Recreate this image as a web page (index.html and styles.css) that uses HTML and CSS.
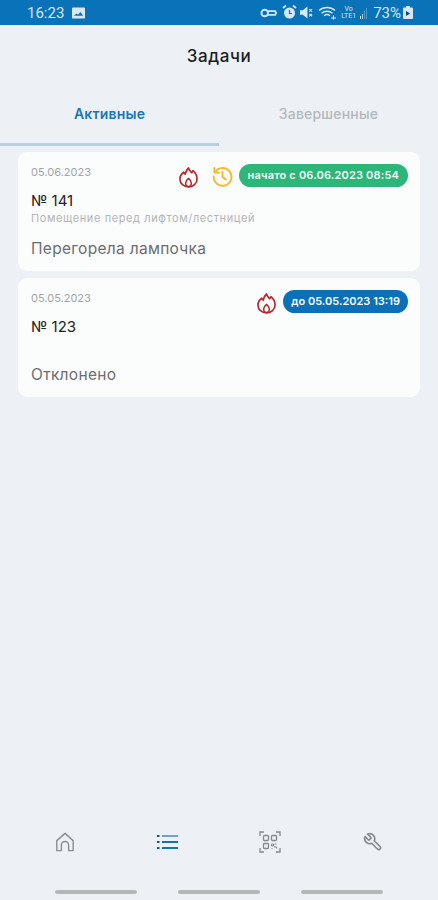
FILE: index.html
```html
<!DOCTYPE html>
<html lang="ru">
<head>
    <meta charset="UTF-8">
    <title>Задачи</title>
    <meta name="viewport" content="width=device-width, initial-scale=1.0">
    <link rel="stylesheet" href="styles.css">
</head>
<body>
    <div class="status-bar">
        <div class="status-left">
            <span class="status-time">16:23</span>
            <svg class="status-pic" viewBox="0 0 14 12"><path fill="currentColor" fill-rule="evenodd" d="M1 0h12a1 1 0 011 1v10a1 1 0 01-1 1H1a1 1 0 01-1-1V1a1 1 0 011-1zm1 9h10L9 5 6.5 8 5 6.500z"/></svg>
        </div>
        <div class="status-right">
            <svg class="st-key" viewBox="0 0 18 10" fill="none" stroke="currentColor" stroke-width="2"><circle cx="5" cy="5" r="3.500"/><path d="M8.500 3h7.500l1.200 2-1.200 2H8.500"/></svg>
            <svg class="st-alarm" viewBox="0 0 15 15"><circle cx="7.500" cy="8" r="5.500" fill="currentColor"/><path d="M1 3l3-2.500M14 3l-3-2.500" stroke="currentColor" stroke-width="1.800"/><path d="M7.500 5v3.500h2.500" stroke="#0873b9" stroke-width="1.200" fill="none"/></svg>
            <svg class="st-mute" viewBox="0 0 14 13"><path fill="currentColor" d="M0 4h3l5-4v13L3 9H0z"/><path d="M10 3l3 2.500M13 3l-3 2.500M10 8l3 2.500M13 8l-3 2.500" stroke="currentColor" stroke-width="1.200"/></svg>
            <svg class="st-wifi" viewBox="0 0 18 14" fill="none" stroke="currentColor" stroke-width="1.400"><path d="M1 4.500c4.500-4 11.500-4 16 0M3.500 7.200c3-2.700 8-2.700 11 0M6 9.800c1.700-1.400 4.300-1.400 6 0"/><path d="M13 12h5M15.500 9.500v4" stroke-width="1.200"/></svg>
            <span class="st-lte">Vo LTE1</span>
            <svg class="st-signal" viewBox="0 0 8 12"><path fill="currentColor" d="M0 9h1v3H0z"/><path fill="currentColor" opacity=".8" d="M2 7h1v5H2z"/><path fill="currentColor" opacity=".35" d="M4 4h1v8H4zM6 1h1v11H6z"/></svg>
            <span class="status-batt">73%</span>
            <svg class="st-batt" viewBox="0 0 10 13"><path fill="currentColor" d="M3 0h4v1.500h2a1 1 0 011 1V12a1 1 0 01-1 1H1a1 1 0 01-1-1V2.500a1 1 0 011-1h2z"/><path fill="#0b4a78" d="M3 5l4 2.500L3 10z"/></svg>
        </div>
    </div>

    <h1 class="page-title">Задачи</h1>

    <div class="tabs">
        <div class="tab tab-active">Активные</div>
        <div class="tab">Завершенные</div>
    </div>

    <div class="task-list">
        <div class="task">
            <div class="task-head">
                <span class="task-date">05.06.2023</span>
                <div class="task-tags">
                    <svg class="icon-fire" viewBox="0 0 20 22" fill="none" stroke="#b9292f" stroke-width="1.800" stroke-linejoin="round"><path d="M10 1c.5 2.500 2 3.500 3.500 5 .6-.6 1-1.300 1.200-2.200C17.300 6 19 8.800 19 12.200 19 17.500 15 21 10 21S1 17.500 1 12.500C1 8.500 3.200 6.800 5 5.500c.4 1 .9 1.500 1.500 2C7 5 8 2.800 10 1z"/><path d="M10 12c1.800 1.500 3 2.800 3 4.800 0 2-1.300 3.700-3 3.700s-3-1.700-3-3.700c0-2 1.200-3.300 3-4.800z" stroke-width="1.600"/></svg>
                    <svg class="icon-clock" viewBox="0 0 22 22" fill="none" stroke="#f5b92e" stroke-width="2" stroke-linecap="round" stroke-linejoin="round"><path d="M3.200 6.500A9.300 9.300 0 1 1 1.800 11"/><path d="M2.500 2v4.800h4.800"/><path d="M11 6v5.500l3.500 2.500"/></svg>
                    <span class="pill pill-green">начато с 06.06.2023 08:54</span>
                </div>
            </div>
            <div class="task-num">№ 141</div>
            <div class="task-place">Помещение перед лифтом/лестницей</div>
            <div class="task-desc">Перегорела лампочка</div>
        </div>
        <div class="task">
            <div class="task-head">
                <span class="task-date">05.05.2023</span>
                <div class="task-tags">
                    <svg class="icon-fire" viewBox="0 0 20 22" fill="none" stroke="#b9292f" stroke-width="1.800" stroke-linejoin="round"><path d="M10 1c.5 2.500 2 3.500 3.500 5 .6-.6 1-1.300 1.200-2.200C17.300 6 19 8.800 19 12.200 19 17.500 15 21 10 21S1 17.500 1 12.500C1 8.500 3.200 6.800 5 5.500c.4 1 .9 1.500 1.500 2C7 5 8 2.800 10 1z"/><path d="M10 12c1.800 1.500 3 2.800 3 4.800 0 2-1.300 3.700-3 3.700s-3-1.700-3-3.700c0-2 1.200-3.300 3-4.800z" stroke-width="1.600"/></svg>
                    <span class="pill pill-blue">до 05.05.2023 13:19</span>
                </div>
            </div>
            <div class="task-num">№ 123</div>
            <div class="task-place"></div>
            <div class="task-desc">Отклонено</div>
        </div>
    </div>

    <div class="bottom-nav">
        <svg class="nav-icon" viewBox="0 0 20 22" fill="none" stroke="#8b8f92" stroke-width="1.600" stroke-linejoin="round"><path d="M1 20.500V9.500L10 1.500l9 8v11h-5v-6a4 4 0 0 0-8 0v6z"/></svg>
        <svg class="nav-icon" viewBox="0 0 22 18" fill="none" stroke="#1272b4" stroke-width="2"><path d="M5 3h16" stroke="#6ea4cc"/><path d="M5 9h16M5 15h16"/><path d="M0 3h2.500M0 9h2.500M0 15h2.500" stroke="#0b5c98"/></svg>
        <svg class="nav-icon nav-scan" viewBox="0 0 22 22" fill="none" stroke="#85898c" stroke-width="1.300"><path d="M1 5V1h4M17 1h4v4M1 17v4h4M21 17v4h-4"/><rect x="4.500" y="4.500" width="5" height="5" rx="1"/><rect x="12.500" y="4.500" width="5" height="5" rx="1"/><rect x="4.500" y="12.500" width="5" height="5" rx="1"/><path d="M12.500 13h2v2h-2zM15.500 13h2M15 16h2.500v1.500M12.500 17.500h1" stroke-width="1"/></svg>
        <svg class="nav-icon nav-wrench" viewBox="0 0 24 24" fill="none" stroke="#85898c" stroke-width="2" stroke-linecap="round" stroke-linejoin="round"><path d="M14.700 6.300a1 1 0 0 0 0 1.400l1.600 1.600a1 1 0 0 0 1.400 0l3.770-3.770a6 6 0 0 1-7.940 7.940l-6.910 6.910a2.120 2.120 0 0 1-3-3l6.910-6.910a6 6 0 0 1 7.940-7.940l-3.760 3.760z"/></svg>
    </div>

    <div class="gesture-bar">
        <span></span>
        <span></span>
        <span></span>
    </div>
</body>
</html>
```

FILE: styles.css
```css
html, body {
    margin: 0;
    height: 100%;
}
body {
    font-family: 'Inter', 'Noto Sans', sans-serif;
    background: #edf1f5;
    display: flex;
    flex-direction: column;
    height: 100vh;
    overflow: hidden;
}
.status-bar {
    background: #0873b9;
    color: #d7e7f3;
    height: 25px;
    flex-shrink: 0;
    display: flex;
    justify-content: space-between;
    align-items: center;
    padding: 0 25px 0 27px;
    font-family: 'Roboto', sans-serif;
    font-size: 15px;
}
.status-left, .status-right {
    display: flex;
    align-items: center;
}
.status-pic {
    width: 13px;
    height: 12px;
    margin-left: 8px;
}
.st-key { width: 17px; height: 10px; }
.st-alarm { width: 15px; height: 15px; margin-left: 5px; }
.st-mute { width: 13px; height: 13px; margin-left: 3px; }
.st-wifi { width: 18px; height: 14px; margin-left: 5px; }
.st-lte {
    font-size: 7px;
    width: 19px;
    margin-left: 3px;
    line-height: 7px;
    text-align: center;
}
.st-signal { width: 8px; height: 12px; margin-left: 2px; }
.status-batt { margin-left: 5px; }
.st-batt { width: 10px; height: 13px; margin-left: 2px; }
.page-title {
    margin: 0;
    padding-top: 21px;
    height: 36px;
    font-size: 17px;
    letter-spacing: .6px;
    line-height: 20px;
    font-weight: 500;
    color: #1c1c1c;
    text-align: center;
}
.tabs {
    display: grid;
    grid-template-columns: 219px 219px;
    margin-top: 12px;
}
.tab {
    height: 52px;
    line-height: 40px;
    box-sizing: border-box;
    text-align: center;
    font-size: 14px;
    letter-spacing: .2px;
    font-weight: 500;
    color: #b4b8bb;
    border-bottom: 3px solid transparent;
}
.tab-active {
    color: #1a76b5;
    font-weight: 600;
    border-bottom-color: #b9d0e4;
}
.task-list {
    display: flex;
    flex-direction: column;
    gap: 7px;
    margin: 6px 18px 0;
}
.task {
    background: #fbfcfc;
    border-radius: 9px;
    padding: 12px 12px 12px 13px;
    height: 119px;
    box-sizing: border-box;
}
.task-head {
    display: flex;
    justify-content: space-between;
    height: 24px;
}
.task-date {
    font-size: 11px;
    line-height: 16px;
    color: #a3a5a7;
}
.task-tags {
    display: flex;
    align-items: flex-start;
}
.icon-fire {
    width: 19px;
    height: 21px;
    margin-top: 3px;
    margin-right: 7px;
}
.icon-clock {
    width: 21px;
    height: 21px;
    margin: 2px 6px 0 7px;
}
.pill {
    height: 23px;
    line-height: 23px;
    padding: 0 9px;
    border-radius: 12px;
    color: #f4fbf8;
    font-size: 11px;
    font-weight: 600;
    white-space: nowrap;
}
.pill-green {
    background: #2cb678;
    letter-spacing: .17px;
}
.pill-blue {
    background: #0b70b5;
    padding: 0 8px;
}
.task-num {
    margin-top: 3px;
    font-size: 15px;
    line-height: 20px;
    color: #222;
}
.task-place {
    margin-top: 1px;
    height: 12px;
    font-size: 11px;
    letter-spacing: .6px;
    line-height: 12px;
    color: #b3b5b7;
}
.task-desc {
    margin-top: 15px;
    font-size: 15.500px;
    letter-spacing: .3px;
    line-height: 20px;
    color: #6b6d6f;
}
.bottom-nav {
    margin-top: auto;
    display: flex;
    justify-content: space-between;
    align-items: center;
    padding: 0 54px;
    height: 24px;
}
.nav-icon {
    width: 22px;
    height: 20px;
}
.nav-scan {
    height: 22px;
}
.nav-wrench {
    transform: scaleX(-1);
}
.gesture-bar {
    display: flex;
    justify-content: center;
    gap: 41px;
    margin-top: 36px;
    margin-bottom: 6px;
}
.gesture-bar span {
    width: 82px;
    height: 4px;
    border-radius: 2px;
    background: #b4b6b8;
}
```
